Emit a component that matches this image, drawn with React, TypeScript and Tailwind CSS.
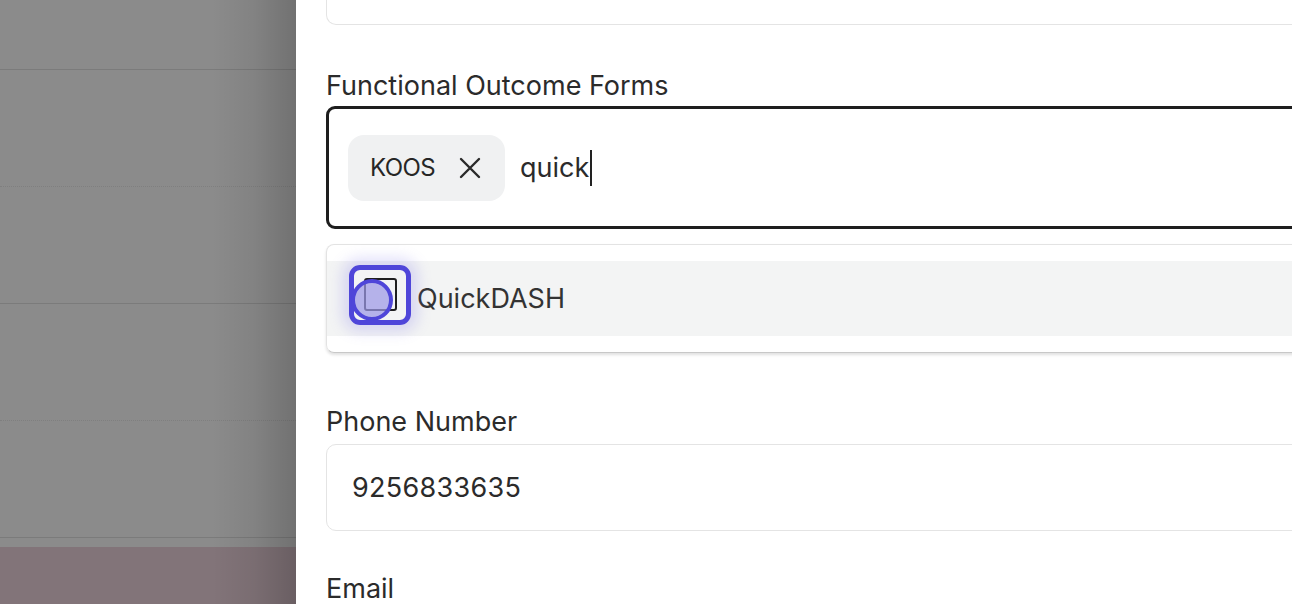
import React from "react";

function BackdropRow({ dotted }: { dotted?: boolean }) {
  return (
    <div
      className={
        "h-[117px] shrink-0 border-b " +
        (dotted ? "border-dotted border-[#7f7f7f]" : "border-[#7b7b7b]")
      }
    />
  );
}

export default function App() {
  return (
    <div
      className="relative flex w-[1292px] h-[604px] overflow-hidden bg-white text-[#2b2b2b]"
      style={{ fontFamily: "Inter, 'Noto Sans', sans-serif" }}
    >
      {/* dimmed page behind the drawer */}
      <div className="relative w-[296px] shrink-0 flex flex-col bg-[#8b8b8b]">
        <div className="h-[70px] shrink-0 border-b border-[#7b7b7b]" />
        <BackdropRow dotted />
        <BackdropRow />
        <BackdropRow dotted />
        <BackdropRow />
        <div className="h-[9px] shrink-0 bg-[#8b8b8b]" />
        <div className="flex-1 bg-[#827479]" />
        <div className="absolute inset-y-0 right-0 w-[84px] bg-gradient-to-r from-transparent via-[#00000010] to-[#00000030]" />
      </div>

      {/* drawer */}
      <div className="flex-1 min-w-0 bg-white pl-[30px] flex flex-col">
        {/* previous input, cut off at top */}
        <div className="w-[1100px] h-[25px] shrink-0 border-x border-b border-[#e4e4e4] rounded-b-[10px]" />

        <div className="mt-[45px] text-[27px] leading-[32px] text-[#2b2b2b]">Functional Outcome Forms</div>

        {/* focused multi-select */}
        <div className="mt-[4px] w-[1100px] h-[123px] shrink-0 border-[3px] border-[#1e1e1e] rounded-[9px] flex items-center pl-[19px] gap-[15px]">
          <div className="h-[66px] w-[157px] rounded-[16px] bg-[#f0f1f2] flex items-center pl-[22px] gap-[24px]">
            <span className="text-[24px] leading-none text-[#262626] tracking-[-0.6px]">KOOS</span>
            <svg width="22" height="22" viewBox="0 0 22 22" fill="none" stroke="#2a2a2a" strokeWidth="2.4" strokeLinecap="round">
              <path d="M2 2l18 18M20 2L2 20" />
            </svg>
          </div>
          <div className="flex items-center">
            <span className="text-[27px] leading-none text-[#2b2b2b]">quick</span>
            <span className="w-[2px] h-[36px] bg-[#222] ml-[1px]" />
          </div>
        </div>

        {/* options dropdown */}
        <div className="mt-[15px] w-[1100px] h-[109px] shrink-0 border border-[#e3e3e3] border-b-[#c8c8c8] rounded-[8px] shadow-[0_2px_3px_rgba(0,0,0,0.12)] pt-[16px]">
          <div className="h-[75px] bg-[#f3f4f4] flex items-center pl-[22px]">
            <div className="relative mb-[8px] w-[62px] h-[60px] shrink-0 rounded-[11px] border-[5px] border-[#4f46d9] flex items-center justify-center shadow-[0_0_14px_7px_rgba(120,110,230,0.22)]">
              <div className="w-[33px] h-[33px] rounded-[3px] border-[2.5px] border-[#1f1f1f]" />
              <div className="absolute left-[-3px] top-[9px] w-[42px] h-[42px] rounded-full border-[4px] border-[#4f46d9] bg-[#9c98e6b8]" />
            </div>
            <span className="ml-[6px] text-[27px] leading-none text-[#333]">QuickDASH</span>
          </div>
        </div>

        <div className="mt-[53px] text-[27px] leading-[32px] text-[#2b2b2b]">Phone Number</div>
        <div className="mt-[6px] w-[1100px] h-[87px] shrink-0 border border-[#e4e4e4] rounded-[10px] flex items-center pl-[25px]">
          <span className="text-[27px] leading-none text-[#2b2b2b] tracking-[0.3px]">9256833635</span>
        </div>

        <div className="mt-[42px] text-[27px] leading-[32px] text-[#2b2b2b]">Email</div>
      </div>
    </div>
  );
}
